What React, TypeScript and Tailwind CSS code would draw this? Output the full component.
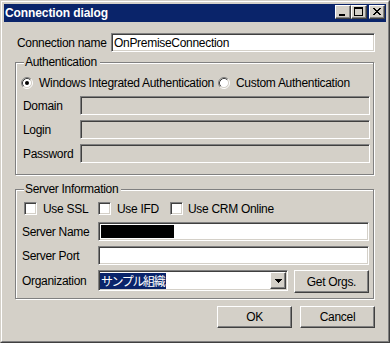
import React from "react";

const raised =
  "border border-t-white border-l-white border-r-[#404040] border-b-[#404040] shadow-[inset_-1px_-1px_0_#808080] bg-[#d4d0c8]";
const sunken =
  "border border-t-[#808080] border-l-[#808080] border-r-white border-b-white shadow-[inset_1px_1px_0_#404040,inset_-1px_-1px_0_#d4d0c8]";
const groupBox =
  "relative ml-[11px] w-[359px] border border-[#808080] shadow-[inset_1px_1px_0_#ffffff,1px_1px_0_#ffffff]";

function TitleBtn({ kind }: { kind: "min" | "max" | "close" }) {
  return (
    <div className={`w-[16px] h-[14px] ${raised} flex`}>
      <svg width="14" height="12" viewBox="0 0 14 12" shapeRendering="crispEdges">
        {kind === "min" && <rect x="3" y="8" width="6" height="2" fill="#000" />}
        {kind === "max" && (
          <g fill="#000">
            <rect x="2" y="1" width="9" height="2" />
            <rect x="2" y="1" width="1" height="9" />
            <rect x="10" y="1" width="1" height="9" />
            <rect x="2" y="9" width="9" height="1" />
          </g>
        )}
        {kind === "close" && (
          <g fill="#000">
            <rect x="3" y="2" width="2" height="1" />
            <rect x="9" y="2" width="2" height="1" />
            <rect x="4" y="3" width="2" height="1" />
            <rect x="8" y="3" width="2" height="1" />
            <rect x="5" y="4" width="4" height="1" />
            <rect x="6" y="5" width="2" height="1" />
            <rect x="5" y="6" width="4" height="1" />
            <rect x="4" y="7" width="2" height="1" />
            <rect x="8" y="7" width="2" height="1" />
            <rect x="3" y="8" width="2" height="1" />
            <rect x="9" y="8" width="2" height="1" />
          </g>
        )}
      </svg>
    </div>
  );
}

function Radio({ checked }: { checked?: boolean }) {
  return (
    <svg width="12" height="12" viewBox="0 0 12 12" className="shrink-0">
      <circle cx="6" cy="6" r="4.5" fill="#fff" />
      <path d="M2.11 9.89 A5.5 5.5 0 0 1 9.89 2.11" stroke="#808080" fill="none" />
      <path d="M9.89 2.11 A5.5 5.5 0 0 1 2.11 9.89" stroke="#ffffff" fill="none" />
      <path d="M2.82 9.18 A4.5 4.5 0 0 1 9.18 2.82" stroke="#404040" fill="none" />
      <path d="M9.18 2.82 A4.5 4.5 0 0 1 2.82 9.18" stroke="#d4d0c8" fill="none" />
      {checked && <circle cx="6" cy="6" r="2" fill="#000" />}
    </svg>
  );
}

function Check() {
  return <div className={`w-[13px] h-[13px] shrink-0 bg-white ${sunken}`} />;
}

function TextBox({
  w,
  value,
  disabled,
  children,
}: {
  w: string;
  value?: string;
  disabled?: boolean;
  children?: React.ReactNode;
}) {
  return (
    <div
      className={`${w} h-[19px] ${sunken} ${
        disabled ? "bg-[#d4d0c8]" : "bg-white"
      } flex items-center pl-[2px] overflow-hidden whitespace-nowrap`}
    >
      {value}
      {children}
    </div>
  );
}

function Button({ w, h, label }: { w: string; h: string; label: string }) {
  return (
    <div className={`${w} ${h} ${raised} flex items-center justify-center`}>
      {label}
    </div>
  );
}

export default function App() {
  return (
    <div className="w-[390px] h-[343px] bg-[#d4d0c8] border border-t-[#d4d0c8] border-l-[#d4d0c8] border-r-[#404040] border-b-[#404040] font-['Liberation_Sans','Noto_Sans_CJK_JP',sans-serif] text-[12px] leading-[14px] text-black tracking-[-0.3px] select-none">
      <div className="h-full flex flex-col border border-t-white border-l-white border-r-[#808080] border-b-[#808080] p-[2px]">
        {/* Title bar */}
        <div className="h-[18px] shrink-0 bg-[#0a246a] flex items-center pl-[1px] pr-[1px]">
          <span className="flex-1 text-white font-bold text-[12px] tracking-[-0.1px] whitespace-nowrap">
            Connection dialog
          </span>
          <div className="flex self-start mt-[1px]">
            <TitleBtn kind="min" />
            <TitleBtn kind="max" />
            <div className="w-[2px]" />
            <TitleBtn kind="close" />
          </div>
        </div>

        {/* Connection name */}
        <div className="mt-[11px] h-[19px] flex items-center pl-[13px]">
          <span className="w-[94px] whitespace-nowrap">Connection name</span>
          <TextBox w="w-[264px]" value="OnPremiseConnection" />
        </div>

        {/* Authentication group */}
        <div className={`${groupBox} mt-[10px] pb-[11px]`}>
          <span className="absolute left-[8px] -top-[8px] leading-[14px] bg-[#d4d0c8] pl-[1px] pr-[3px] whitespace-nowrap">
            Authentication
          </span>
          <div className="mt-[13px] h-[13px] flex items-center pl-[5px]">
            <div className="w-[197px] shrink-0 flex items-center gap-[6px] whitespace-nowrap">
              <Radio checked />
              <span>Windows Integrated Authentication</span>
            </div>
            <div className="flex items-center gap-[6px] whitespace-nowrap">
              <Radio />
              <span>Custom Authentication</span>
            </div>
          </div>
          <div className="mt-[7px] flex flex-col gap-[5px] pl-[7px]">
            <div className="flex items-center">
              <span className="w-[57px]">Domain</span>
              <TextBox w="w-[290px]" disabled />
            </div>
            <div className="flex items-center">
              <span className="w-[57px]">Login</span>
              <TextBox w="w-[290px]" disabled />
            </div>
            <div className="flex items-center">
              <span className="w-[57px]">Password</span>
              <TextBox w="w-[290px]" disabled />
            </div>
          </div>
        </div>

        {/* Server Information group */}
        <div className={`${groupBox} mt-[14px] pb-[5px]`}>
          <span className="absolute left-[8px] -top-[8px] leading-[14px] bg-[#d4d0c8] pl-[1px] pr-[3px] whitespace-nowrap">
            Server Information
          </span>
          <div className="mt-[12px] h-[13px] flex items-center pl-[8px] whitespace-nowrap">
            <div className="w-[74px] flex items-center gap-[6px]">
              <Check />
              <span>Use SSL</span>
            </div>
            <div className="w-[72px] flex items-center gap-[6px]">
              <Check />
              <span>Use IFD</span>
            </div>
            <div className="flex items-center gap-[5px]">
              <Check />
              <span>Use CRM Online</span>
            </div>
          </div>
          <div className="mt-[7px] flex flex-col gap-[5px] pl-[6px]">
            <div className="flex items-center">
              <span className="w-[76px]">Server Name</span>
              <TextBox w="w-[271px]">
                <div className="w-[73px] h-[13px] bg-black" />
              </TextBox>
            </div>
            <div className="flex items-center">
              <span className="w-[76px]">Server Port</span>
              <TextBox w="w-[271px]" />
            </div>
            <div className="flex items-start">
              <span className="w-[76px] h-[21px] flex items-center">Organization</span>
              <div className={`w-[190px] h-[21px] bg-white ${sunken} p-[1px] flex`}>
                <div className="flex-1 flex items-center">
                  <span className="h-[16px] pl-[1px] pr-[2px] bg-[#0a246a] text-white flex items-center tracking-[-1.4px] font-['Noto_Sans_CJK_JP',sans-serif] text-[12px]">
                    サンプル組織
                  </span>
                </div>
                <div className={`w-[16px] h-full ${raised} flex items-center justify-center`}>
                  <svg width="7" height="4" viewBox="0 0 7 4" shapeRendering="crispEdges">
                    <rect x="0" y="0" width="7" height="1" fill="#000" />
                    <rect x="1" y="1" width="5" height="1" fill="#000" />
                    <rect x="2" y="2" width="3" height="1" fill="#000" />
                    <rect x="3" y="3" width="1" height="1" fill="#000" />
                  </svg>
                </div>
              </div>
              <div className="ml-[6px]">
                <Button w="w-[75px]" h="h-[23px]" label="Get Orgs." />
              </div>
            </div>
          </div>
        </div>

        {/* Bottom buttons */}
        <div className="mt-[7px] flex justify-end gap-[8px] pr-[11px]">
          <Button w="w-[75px]" h="h-[22px]" label="OK" />
          <Button w="w-[75px]" h="h-[22px]" label="Cancel" />
        </div>
      </div>
    </div>
  );
}
